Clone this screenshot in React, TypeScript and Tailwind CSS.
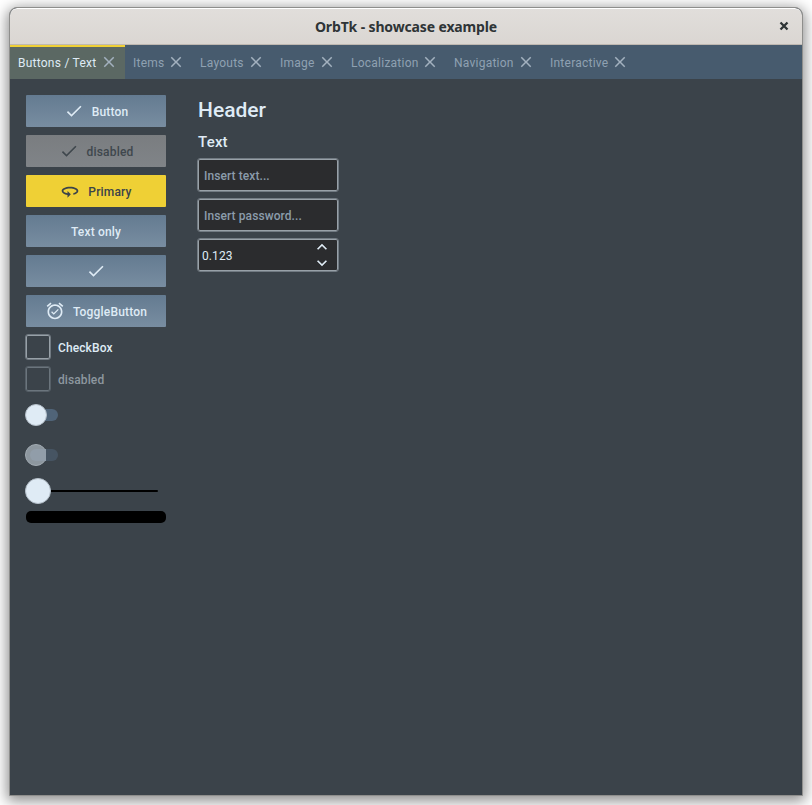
import React from 'react';

const CHECK = 'M9 16.17 4.83 12l-1.42 1.41L9 19 21 7l-1.41-1.41L9 16.17z';
const ROTATE =
  'M12 7C6.48 7 2 9.24 2 12c0 2.24 2.94 4.13 7 4.77V20l4-4-4-4v2.73c-3.15-.56-5-1.9-5-2.73 0-1.06 3.04-3 8-3s8 1.94 8 3c0 .73-1.46 1.89-4 2.53v2.05c3.53-.77 6-2.53 6-4.58 0-2.76-4.48-5-10-5z';
const ALARM =
  'M22 5.72l-4.6-3.86-1.29 1.53 4.6 3.86L22 5.72zM7.88 3.39L6.6 1.86 2 5.71l1.29 1.53 4.59-3.85zM12 4c-4.97 0-9 4.03-9 9s4.02 9 9 9c4.97 0 9-4.03 9-9s-4.03-9-9-9zm0 16c-3.87 0-7-3.13-7-7s3.13-7 7-7 7 3.13 7 7-3.13 7-7 7zm-1.46-5.47L8.41 12.4l-1.06 1.06 3.18 3.18 6-6-1.06-1.06-4.93 4.95z';
const CLOSE =
  'M19 6.41 17.59 5 12 10.59 6.41 5 5 6.41 10.59 12 5 17.59 6.41 19 12 13.41 17.59 19 19 17.59 13.41 12z';
const UP = 'M12 8l-6 6 1.41 1.41L12 10.83l4.59 4.58L18 14z';
const DOWN = 'M16.59 8.59L12 13.17 7.41 8.59 6 10l6 6 6-6z';

function Icon({ d, className }: { d: string; className: string }) {
  return (
    <svg viewBox="0 0 24 24" fill="currentColor" className={`shrink-0 ${className}`}>
      <path d={d} />
    </svg>
  );
}

const tabs = [
  { label: 'Buttons / Text', width: 'w-[115px]' },
  { label: 'Items', width: 'w-[67px]' },
  { label: 'Layouts', width: 'w-[80px]' },
  { label: 'Image', width: 'w-[71px]' },
  { label: 'Localization', width: 'w-[103px]' },
  { label: 'Navigation', width: 'w-[96px]' },
  { label: 'Interactive', width: 'w-[94px]' },
];

function Button({ icon, label, tone }: { icon?: string; label?: string; tone?: 'disabled' | 'primary' }) {
  const look =
    tone === 'disabled'
      ? 'bg-linear-to-b from-[#7a7d80] to-[#808488] text-[#3f474d]'
      : tone === 'primary'
        ? 'bg-[#efd035] text-[#3b434a]'
        : 'bg-linear-to-b from-[#647b91] to-[#788da1] text-[#dfebf5]';
  return (
    <button className={`flex h-8 w-[140px] items-center justify-center gap-2 rounded-[1px] text-[12px] font-medium tracking-[0.18px] ${look}`}>
      {icon && <Icon d={icon} className="size-5" />}
      {label && <span className="pt-[2px]">{label}</span>}
    </button>
  );
}

function Field({ text }: { text: string }) {
  return (
    <div className="flex h-[34px] w-[142px] items-center rounded-[3px] border border-[#717a82] bg-[#2b2c2e] pt-[2px] pl-[6px] text-[12px] font-medium tracking-[0.08px] text-[#8b9cab] shadow-[inset_0_0_0_1px_#98a1a8]">
      {text}
    </div>
  );
}

export default function App() {
  return (
    <div className="h-[805px] w-[812px] overflow-hidden bg-white pt-[7px] pl-[9px] font-[Roboto,sans-serif]">
      <div className="flex h-[789px] w-[794px] flex-col overflow-hidden rounded-t-[8px] border border-[#8e8e8c] bg-[#3b434a] shadow-[0_3px_14px_2px_rgba(0,0,0,0.45)]">
        <header className="grid h-[37px] shrink-0 grid-cols-[1fr_auto_1fr] items-center rounded-t-[7px] border-t border-white bg-linear-to-b from-[#e1dedb] to-[#dad6d2] pb-px shadow-[inset_0_-1px_0_#bfb8b1]">
          <span />
          <h1 className="font-['Noto_Sans',sans-serif] text-[14px] leading-none font-bold tracking-[-0.14px] text-[#2e3436]">OrbTk - showcase example</h1>
          <svg viewBox="0 0 10 10" className="mr-[13px] mb-px size-[10px] justify-self-end">
            <path d="M1.5 1.5 8.5 8.5M8.5 1.5 1.5 8.5" stroke="#2e3436" strokeWidth="2.3" />
          </svg>
        </header>
        <nav className="flex h-[34px] shrink-0 bg-[#475b6e]">
          {tabs.map((tab, i) => (
            <div
              key={tab.label}
              className={`flex h-full items-center justify-between pr-[7px] pl-2 text-[12px] tracking-[0.24px] ${tab.width} ${
                i === 0 ? 'bg-[#5b6863] text-[#dfebf5] shadow-[inset_0_2px_0_#efd035]' : 'text-[#8fa1b2]'
              }`}
            >
              <span className="pt-px whitespace-nowrap">{tab.label}</span>
              <Icon d={CLOSE} className="size-[18px] text-[#a3b1bf]" />
            </div>
          ))}
        </nav>
        <main className="flex gap-[31px] pt-4 pl-4">
          <section className="flex w-[140px] flex-col">
            <div className="flex flex-col gap-2">
              <Button icon={CHECK} label="Button" />
              <Button icon={CHECK} label="disabled" tone="disabled" />
              <Button icon={ROTATE} label="Primary" tone="primary" />
              <Button label="Text only" />
              <Button icon={CHECK} />
              <Button icon={ALARM} label="ToggleButton" />
            </div>
            <div className="mt-[7px] -ml-px flex items-center gap-[7px] text-[12px] font-medium tracking-[0.1px] text-[#dfebf5]">
              <span className="size-[26px] rounded-[3px] border border-[#717a82] shadow-[inset_0_0_0_1px_#98a1a8]" />
              <span className="pt-[2px]">CheckBox</span>
            </div>
            <div className="mt-[6px] -ml-px flex items-center gap-[7px] text-[12px] font-medium tracking-[0.1px] text-[#8d979f]">
              <span className="size-[26px] rounded-[3px] border border-[#565f67] shadow-[inset_0_0_0_1px_#6b757d]" />
              <span className="pt-[2px]">disabled</span>
            </div>
            <div className="mt-3 -ml-px flex items-center">
              <span className="z-10 size-[22px] rounded-full border border-[#b5c0ca] bg-[#dfebf5]" />
              <span className="-ml-[17px] h-3 w-7 rounded-full bg-[#506478]" />
            </div>
            <div className="mt-[18px] -ml-px flex items-center">
              <span className="size-[22px] rounded-full border border-[#a2abb2] bg-[#8d979f]" />
              <span className="-ml-[17px] h-3 w-7 rounded-full bg-linear-to-r from-[#919da9] from-[16px] to-[#465462] to-[16px]" />
            </div>
            <div className="mt-3 -ml-px flex items-center">
              <span className="size-[26px] rounded-full border border-[#b5c0ca] bg-[#dfebf5]" />
              <span className="h-[2px] w-[107px] rounded-r-full bg-black" />
            </div>
            <div className="mt-[7px] h-3 w-[140px] rounded-[5px] bg-black" />
          </section>
          <section className="flex w-[142px] flex-col">
            <h2 className="mt-[3px] ml-px h-6 text-[21px] leading-6 font-medium text-[#dfebf5]">Header</h2>
            <p className="mt-[10px] ml-px h-5 text-[15px] leading-5 font-medium tracking-[0.2px] text-[#dfebf5]">Text</p>
            <div className="mt-[6px] flex flex-col gap-[6px]">
              <Field text="Insert text..." />
              <Field text="Insert password..." />
              <div className="flex h-[34px] w-[142px] items-center justify-between rounded-[3px] border border-[#717a82] bg-[#2b2c2e] pr-[6px] pl-[4px] text-[12px] tracking-[0.1px] text-[#dfebf5] shadow-[inset_0_0_0_1px_#98a1a8]">
                <span className="pt-[2px]">0.123</span>
                <div className="flex flex-col">
                  <Icon d={UP} className="h-4 w-[20px] scale-125" />
                  <Icon d={DOWN} className="h-4 w-[20px] scale-125" />
                </div>
              </div>
            </div>
          </section>
        </main>
      </div>
    </div>
  );
}
